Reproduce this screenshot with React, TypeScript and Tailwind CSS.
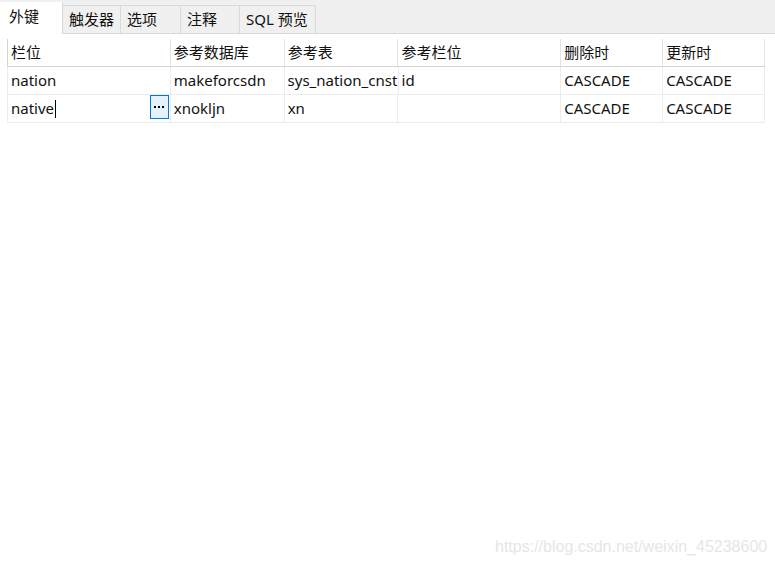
import React from "react";

const tabs = ["外键", "触发器", "选项", "注释", "SQL 预览"];
const tabWidths = ["w-[63px]", "w-[58px]", "w-[60px]", "w-[59px]", "w-[76px]"];

const columns = [
  { title: "栏位", w: "w-[163px]" },
  { title: "参考数据库", w: "w-[114px]" },
  { title: "参考表", w: "w-[114px]" },
  { title: "参考栏位", w: "w-[163px]" },
  { title: "删除时", w: "w-[102px]" },
  { title: "更新时", w: "w-[102px]" },
];

const rows = [
  ["nation", "makeforcsdn", "sys_nation_cnst", "id", "CASCADE", "CASCADE"],
  ["native", "xnokljn", "xn", "", "CASCADE", "CASCADE"],
];

const font = { fontFamily: '"Noto Sans", "Noto Sans CJK SC", sans-serif' };

export default function App() {
  return (
    <div className="relative h-[565px] w-[775px] bg-white text-[15px] text-[#111]" style={font}>
      {/* tab strip */}
      <div className="flex h-[34px] items-end border-b border-[#d9d9d9] bg-[#f0f0f0]">
        <div className="-mb-px flex h-[32px] w-[63px] items-center border-r border-[#d9d9d9] bg-white pb-[3px] pl-[9px]">
          外键
        </div>
        {tabs.slice(1).map((t, i) => (
          <div
            key={t}
            className={`flex h-[28px] ${tabWidths[i + 1]} items-center border-r border-t border-[#d9d9d9] bg-[#f0f0f0] pl-[6px]`}
          >
            {t}
          </div>
        ))}
      </div>

      {/* grid */}
      <div className="ml-[7px] mt-[5px] w-[758px]">
        <div className="flex h-[28px] border-b border-l border-[#d5d5d5]">
          {columns.map((c) => (
            <div key={c.title} className={`${c.w} flex items-center border-r border-[#e2e2e2] px-[3px]`}>
              {c.title}
            </div>
          ))}
        </div>
        {rows.map((r, ri) => (
          <div key={ri} className="flex h-[28px] border-b border-l border-[#ececec]">
            {r.map((cell, ci) => (
              <div
                key={ci}
                className={`${columns[ci].w} relative flex items-center whitespace-nowrap border-r border-[#ececec] px-[3px]`}
              >
                {cell}
                {ri === 1 && ci === 0 && (
                  <>
                    <span className="ml-px inline-block h-[18px] w-px bg-black" />
                    <span className="absolute right-[1px] top-0 flex h-[24px] w-[19px] items-center justify-center gap-[2px] border border-[#0078d7] bg-[#e5f1fb]">
                      <span className="h-[2px] w-[2px] bg-black" />
                      <span className="h-[2px] w-[2px] bg-black" />
                      <span className="h-[2px] w-[2px] bg-black" />
                    </span>
                  </>
                )}
              </div>
            ))}
          </div>
        ))}
      </div>

      <div
        className="absolute left-[495px] top-[535px] text-[16px] text-[#e6e6e6]"
        style={{ fontFamily: '"Liberation Sans", Arial, sans-serif' }}
      >
        https://blog.csdn.net/weixin_45238600
      </div>
    </div>
  );
}
